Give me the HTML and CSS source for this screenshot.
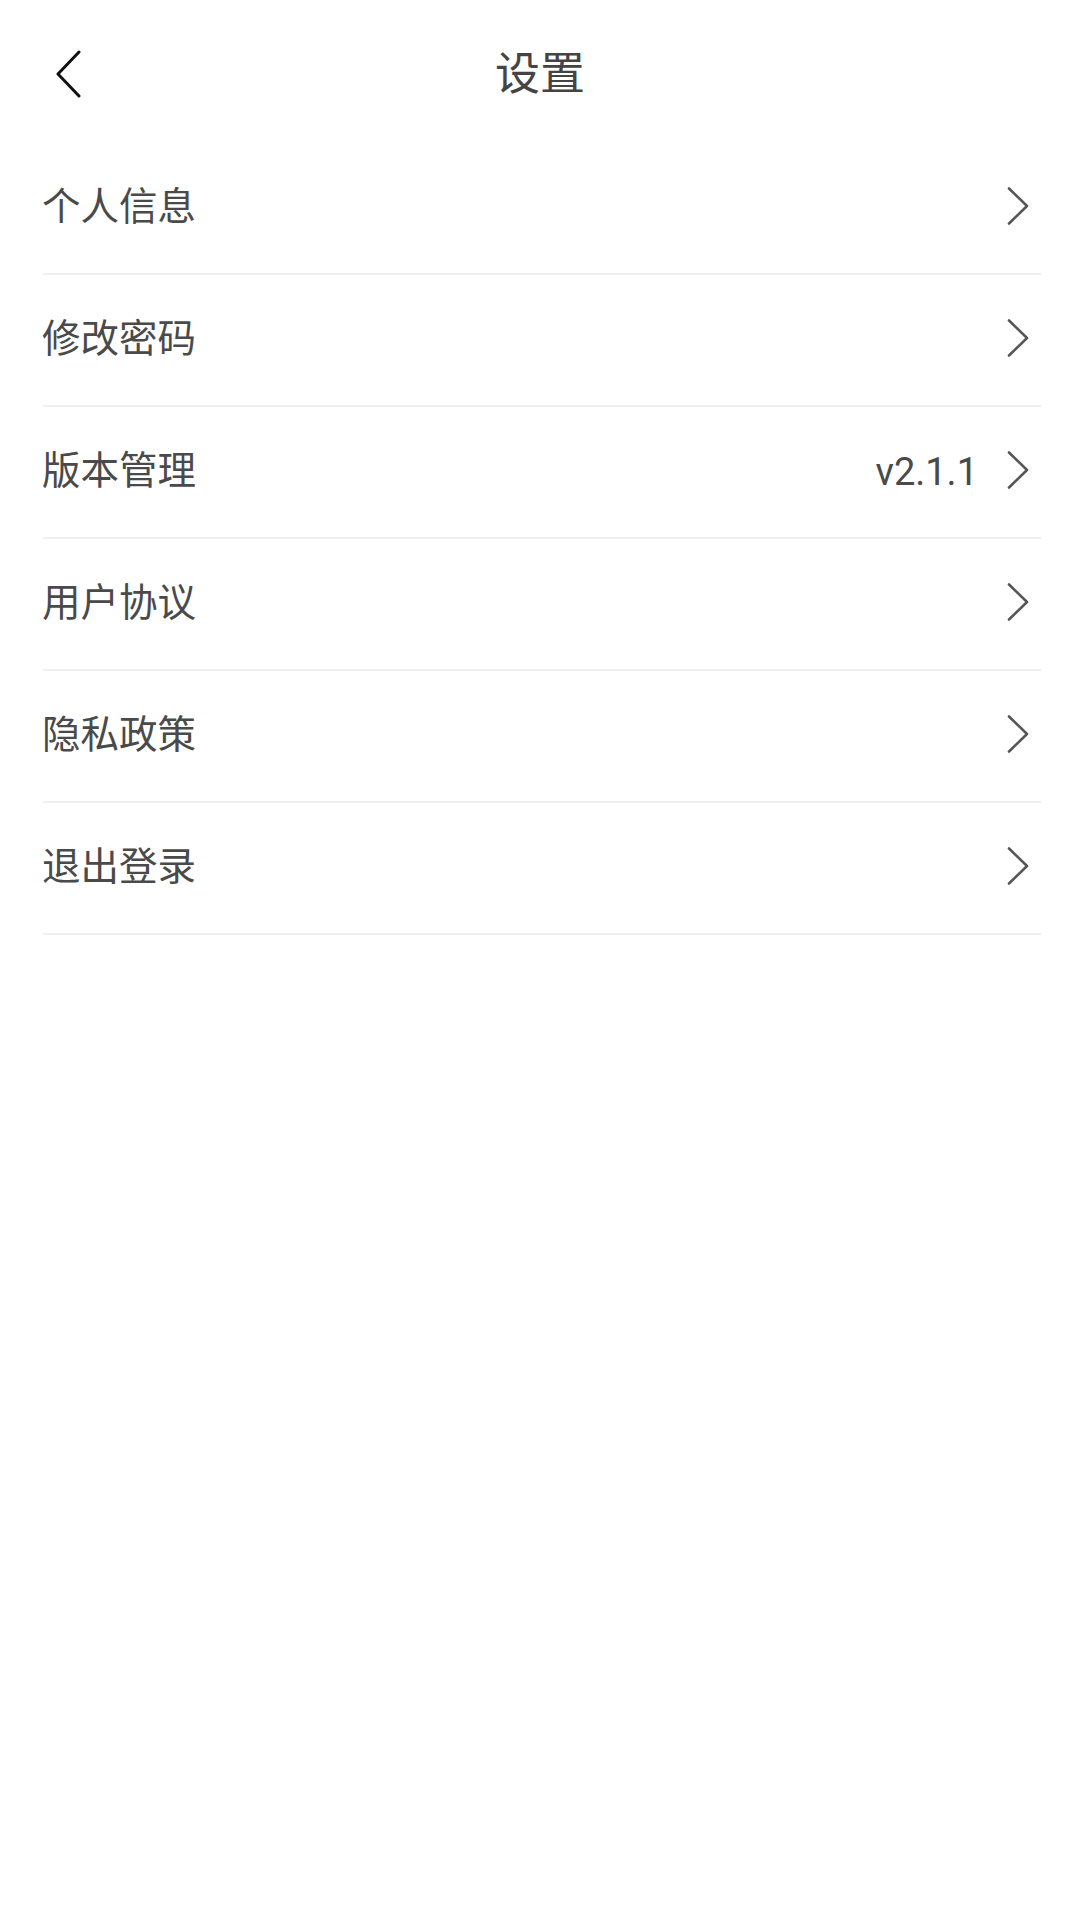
FILE: index.html
```html
<!DOCTYPE html>
<html lang="zh-CN">
<head>
<meta charset="utf-8">
<title>设置</title>
<link rel="stylesheet" href="styles.css">
</head>
<body>
<div class="page">
  <header class="header">
    <div class="back">
      <svg width="28" height="48" viewBox="0 0 28 48"><path d="M25 2 L4 24 L25 46" fill="none" stroke="#111" stroke-width="3" stroke-linecap="round" stroke-linejoin="round"/></svg>
    </div>
    <h1 class="title">设置</h1>
    <div class="spacer"></div>
  </header>
  <ul class="list">
    <li class="row"><span class="label">个人信息</span><span class="right"><svg class="chev" width="22" height="38" viewBox="0 0 22 38"><path d="M2 1.5 L20 19 L2 36.5" fill="none" stroke="#555" stroke-width="2.6" stroke-linecap="round" stroke-linejoin="round"/></svg></span></li>
    <li class="row"><span class="label">修改密码</span><span class="right"><svg class="chev" width="22" height="38" viewBox="0 0 22 38"><path d="M2 1.5 L20 19 L2 36.5" fill="none" stroke="#555" stroke-width="2.6" stroke-linecap="round" stroke-linejoin="round"/></svg></span></li>
    <li class="row"><span class="label">版本管理</span><span class="right"><span class="value">v2.1.1</span><svg class="chev" width="22" height="38" viewBox="0 0 22 38"><path d="M2 1.5 L20 19 L2 36.5" fill="none" stroke="#555" stroke-width="2.6" stroke-linecap="round" stroke-linejoin="round"/></svg></span></li>
    <li class="row"><span class="label">用户协议</span><span class="right"><svg class="chev" width="22" height="38" viewBox="0 0 22 38"><path d="M2 1.5 L20 19 L2 36.5" fill="none" stroke="#555" stroke-width="2.6" stroke-linecap="round" stroke-linejoin="round"/></svg></span></li>
    <li class="row"><span class="label">隐私政策</span><span class="right"><svg class="chev" width="22" height="38" viewBox="0 0 22 38"><path d="M2 1.5 L20 19 L2 36.5" fill="none" stroke="#555" stroke-width="2.6" stroke-linecap="round" stroke-linejoin="round"/></svg></span></li>
    <li class="row"><span class="label">退出登录</span><span class="right"><svg class="chev" width="22" height="38" viewBox="0 0 22 38"><path d="M2 1.5 L20 19 L2 36.5" fill="none" stroke="#555" stroke-width="2.6" stroke-linecap="round" stroke-linejoin="round"/></svg></span></li>
  </ul>
</div>
</body>
</html>
```
FILE: styles.css
```css
html, body {
  margin: 0;
  padding: 0;
  background: #ffffff;
}
body {
  width: 1080px;
  min-height: 1920px;
  font-family: "Noto Sans CJK SC", "Noto Sans", sans-serif;
}
.page {
  display: flex;
  flex-direction: column;
}
.header {
  height: 143px;
  display: grid;
  grid-template-columns: 200px 1fr 200px;
  align-items: center;
  padding-top: 4px;
  box-sizing: border-box;
}
.back {
  padding-left: 54px;
  display: flex;
  align-items: center;
}
.back svg {
  display: block;
}
.title {
  margin: 0 0 6px 0;
  text-align: center;
  font-size: 45px;
  font-weight: 400;
  color: #444444;
  line-height: 1;
}
.list {
  list-style: none;
  margin: 0 39px 0 43px;
  padding: 0;
}
.row {
  height: 132px;
  box-sizing: border-box;
  border-bottom: 2px solid #f0f0f0;
  display: flex;
  align-items: center;
  justify-content: space-between;
}
.label {
  font-size: 38.5px;
  color: #4a4a4a;
  line-height: 1;
  margin-bottom: 10px;
  margin-left: -1px;
}
.right {
  display: flex;
  align-items: center;
  padding-right: 12px;
}
.value {
  font-family: Roboto, "Noto Sans", sans-serif;
  font-size: 38px;
  color: #4a4a4a;
  margin-right: 29px;
  line-height: 1;
}
.chev {
  display: block;
  margin-bottom: 4px;
}
```
